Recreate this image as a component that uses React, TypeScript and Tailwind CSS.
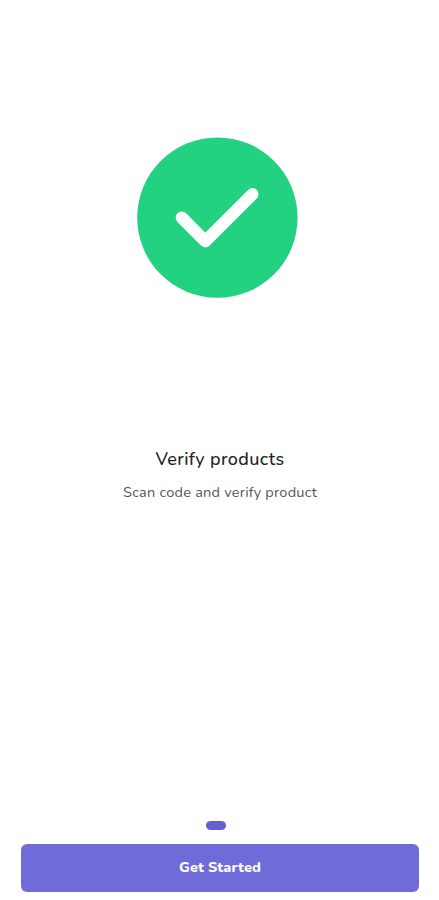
import React from 'react';

interface OnboardingPage {
  title: string;
  description: string;
}

const pages: OnboardingPage[] = [
  { title: 'Verify products', description: 'Scan code and verify product' },
];

const VerifiedIcon: React.FC = () => (
  <svg width="162" height="162" viewBox="0 0 162 162" fill="none" aria-hidden="true">
    <circle cx="81.4" cy="80.6" r="80.2" fill="#23d280" />
    <path
      d="M45.8 80.6L69.3 104.3L116.4 57.2"
      stroke="white"
      strokeWidth="12.2"
      strokeLinecap="round"
      strokeLinejoin="round"
    />
  </svg>
);

const App: React.FC = () => {
  const page = pages[0];

  return (
    <div className="h-[900px] w-full bg-white flex flex-col items-center overflow-hidden font-['Nunito','Open_Sans',sans-serif]">
      {/* Illustration */}
      <div className="pt-[137px] pr-[5px]">
        <VerifiedIcon />
      </div>

      {/* Text */}
      <div className="mt-[148px] pl-px flex flex-col items-center text-center">
        <h1 className="text-[18px] leading-6 font-medium tracking-[0.4px] text-[#242424]">{page.title}</h1>
        <p className="mt-[11px] text-[14.5px] leading-5 tracking-[0.23px] text-[#555555]">{page.description}</p>
      </div>

      {/* Footer */}
      <div className="mt-auto w-full pl-[21px] pr-5 pb-2 flex flex-col items-center">
        <div className="flex gap-2 pr-2">
          {pages.map((item) => (
            <span key={item.title} className="block w-5 h-[9px] rounded-full bg-[#665fd3]" />
          ))}
        </div>
        <button className="mt-3.5 w-full h-12 rounded-md bg-[#6f6bd8] text-[14.5px] font-extrabold tracking-[0.1px] text-white">
          Get Started
        </button>
      </div>
    </div>
  );
};

export default App;
